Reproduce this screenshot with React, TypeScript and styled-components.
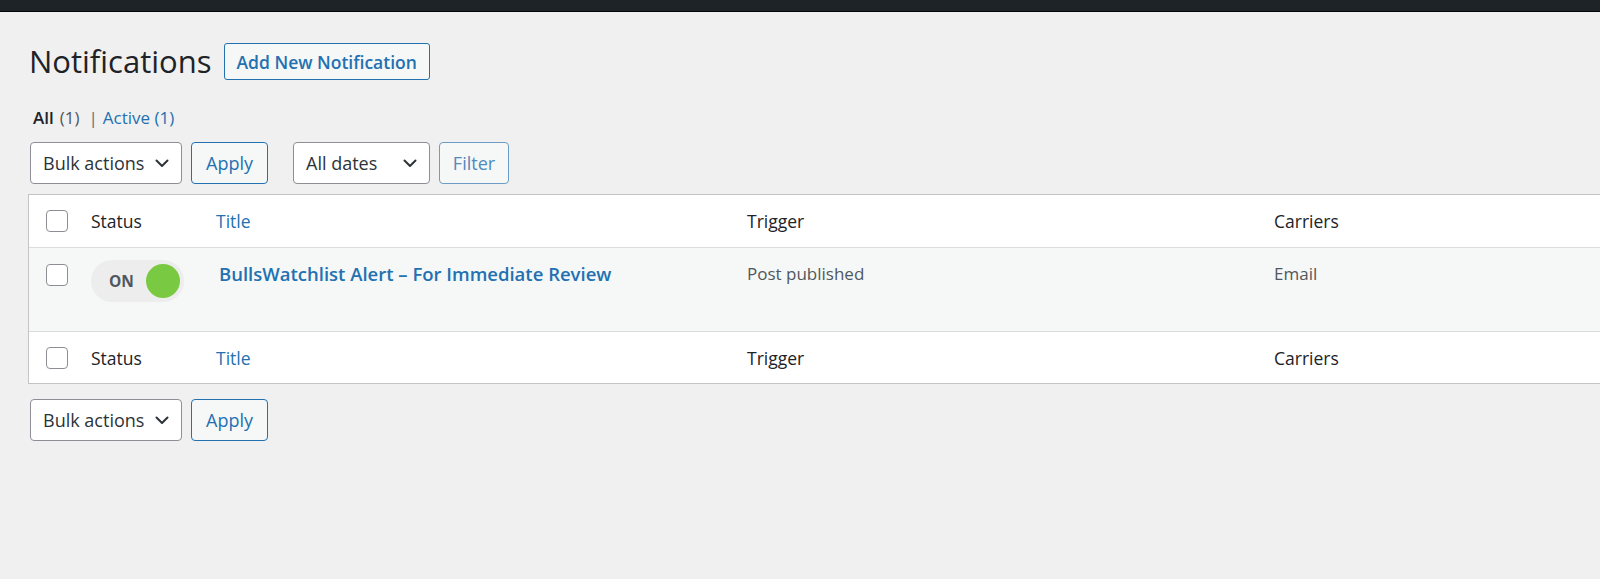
import React from "react";
import styled, { createGlobalStyle } from "styled-components";

const Global = createGlobalStyle`
  html, body { margin: 0; padding: 0; }
  body {
    background: #f0f0f1;
    font-family: "Open Sans", "Noto Sans", sans-serif;
    color: #1d2327;
    overflow: hidden;
    width: 1600px;
    height: 579px;
  }
`;

const TopBar = styled.div`
  height: 11px;
  background: #1d2327;
  border-bottom: 1px solid #050607;
`;

const Page = styled.div`
  padding: 31px 0 0 28px;
  overflow: hidden;
`;

const HeadingRow = styled.div`
  display: flex;
  align-items: center;
  gap: 12px;
  padding-left: 1px;
`;

const Title = styled.h1`
  margin: 0;
  font-size: 31px;
  line-height: 37px;
  font-weight: 400;
  color: #1d2327;
`;

const OutlineButton = styled.button`
  height: 37px;
  padding: 0 12px;
  border: 1px solid #2271b1;
  border-radius: 3px;
  background: #f6f7f7;
  color: #2271b1;
  font-family: inherit;
  font-size: 17.5px;
  font-weight: 600;
`;

const Views = styled.div`
  margin-top: 25px;
  padding-left: 5px;
  height: 24px;
  font-size: 17px;
  color: #50575e;
  display: flex;
  gap: 6px;
  align-items: center;
`;

const ViewCurrent = styled.span`
  color: #1d2327;
  font-weight: 600;
`;

const ViewLink = styled.span`
  color: #2271b1;
`;

const Sep = styled.span`
  color: #646970;
  margin: 0 -1px 0 3px;
`;

const Toolbar = styled.div<{ $top: number }>`
  display: flex;
  align-items: center;
  margin-top: ${(p) => p.$top}px;
  padding-left: 2px;
  height: 42px;
`;

const Select = styled.div<{ $w: number; $gapRight: number }>`
  box-sizing: border-box;
  width: ${(p) => p.$w}px;
  height: 42px;
  margin-right: ${(p) => p.$gapRight}px;
  border: 1px solid #8c8f94;
  border-radius: 4px;
  background: #fff;
  display: flex;
  align-items: center;
  justify-content: space-between;
  padding: 0 11px 0 12px;
  font-size: 18px;
  color: #2c3338;
`;

const SecondaryButton = styled.div<{ $w: number; $gapRight?: number }>`
  box-sizing: border-box;
  width: ${(p) => p.$w}px;
  height: 42px;
  margin-right: ${(p) => p.$gapRight ?? 0}px;
  border: 1px solid #2271b1;
  border-radius: 4px;
  background: #f6f7f7;
  color: #2271b1;
  display: flex;
  align-items: center;
  justify-content: center;
  font-size: 18px;
`;

const FilterButton = styled(SecondaryButton)`
  border-color: #6c9dc6;
  color: #4f8bbd;
`;

const Table = styled.div`
  margin-top: 10px;
  width: 1600px;
  background: #fff;
  border: 1px solid #c3c4c7;
  border-right: none;
`;

const Row = styled.div<{ $h: number; $alt?: boolean; $top?: boolean }>`
  display: grid;
  grid-template-columns: 62px 125px 531px 527px 1fr;
  height: ${(p) => p.$h}px;
  background: ${(p) => (p.$alt ? "#f6f7f7" : "#fff")};
  border-top: ${(p) => (p.$top ? "1px solid #dcdcde" : "none")};
  align-items: ${(p) => (p.$alt ? "start" : "center")};
  font-size: 17px;
`;

const Cell = styled.div<{ $pt?: number; $pl?: number }>`
  padding-top: ${(p) => p.$pt ?? 0}px;
  padding-left: ${(p) => p.$pl ?? 0}px;
  white-space: nowrap;
`;

const HeadText = styled.span<{ $link?: boolean }>`
  font-size: 17.5px;
  color: ${(p) => (p.$link ? "#2271b1" : "#1d2327")};
`;

const Check = styled.span`
  display: block;
  box-sizing: border-box;
  width: 22px;
  height: 22px;
  margin-left: 17px;
  border: 1px solid #8c8f94;
  border-radius: 4px;
  background: #fff;
`;

const Toggle = styled.div`
  box-sizing: border-box;
  width: 93px;
  height: 42px;
  border-radius: 21px;
  background: #ededed;
  display: flex;
  align-items: center;
  justify-content: space-between;
  padding: 0 4px 0 18px;
`;

const ToggleLabel = styled.span`
  font-size: 15.5px;
  font-weight: 700;
  color: #50575e;
`;

const Knob = styled.span`
  width: 34px;
  height: 34px;
  border-radius: 50%;
  background: #7ac943;
`;

const RowTitle = styled.span`
  font-size: 18.5px;
  color: #2271b1;
  font-weight: 600;
`;

const Muted = styled.span`
  color: #50575e;
`;

const Chevron = () => (
  <svg width="16" height="16" viewBox="0 0 16 16" fill="none">
    <path d="M2.5 5.5 L8 11 L13.5 5.5" stroke="#2c3338" strokeWidth="2" strokeLinecap="round" strokeLinejoin="round" />
  </svg>
);

const HeaderCells = () => (
  <>
    <Cell><Check /></Cell>
    <Cell><HeadText>Status</HeadText></Cell>
    <Cell><HeadText $link>Title</HeadText></Cell>
    <Cell><HeadText>Trigger</HeadText></Cell>
    <Cell><HeadText>Carriers</HeadText></Cell>
  </>
);

export default function App() {
  return (
    <>
      <Global />
      <TopBar />
      <Page>
        <HeadingRow>
          <Title>Notifications</Title>
          <OutlineButton>Add New Notification</OutlineButton>
        </HeadingRow>
        <Views>
          <ViewCurrent>All</ViewCurrent>
          <span>(1)</span>
          <Sep>|</Sep>
          <ViewLink>Active (1)</ViewLink>
        </Views>
        <Toolbar $top={13}>
          <Select $w={152} $gapRight={9}>Bulk actions <Chevron /></Select>
          <SecondaryButton $w={77} $gapRight={25}>Apply</SecondaryButton>
          <Select $w={137} $gapRight={9}>All dates <Chevron /></Select>
          <FilterButton $w={70}>Filter</FilterButton>
        </Toolbar>
        <Table>
          <Row $h={52}><HeaderCells /></Row>
          <Row $h={83} $alt $top>
            <Cell $pt={16}><Check /></Cell>
            <Cell $pt={12}>
              <Toggle>
                <ToggleLabel>ON</ToggleLabel>
                <Knob />
              </Toggle>
            </Cell>
            <Cell $pt={13} $pl={3}><RowTitle>BullsWatchlist Alert – For Immediate Review</RowTitle></Cell>
            <Cell $pt={14}><Muted>Post published</Muted></Cell>
            <Cell $pt={14}><Muted>Email</Muted></Cell>
          </Row>
          <Row $h={51} $top><HeaderCells /></Row>
        </Table>
        <Toolbar $top={15}>
          <Select $w={152} $gapRight={9}>Bulk actions <Chevron /></Select>
          <SecondaryButton $w={77}>Apply</SecondaryButton>
        </Toolbar>
      </Page>
    </>
  );
}
